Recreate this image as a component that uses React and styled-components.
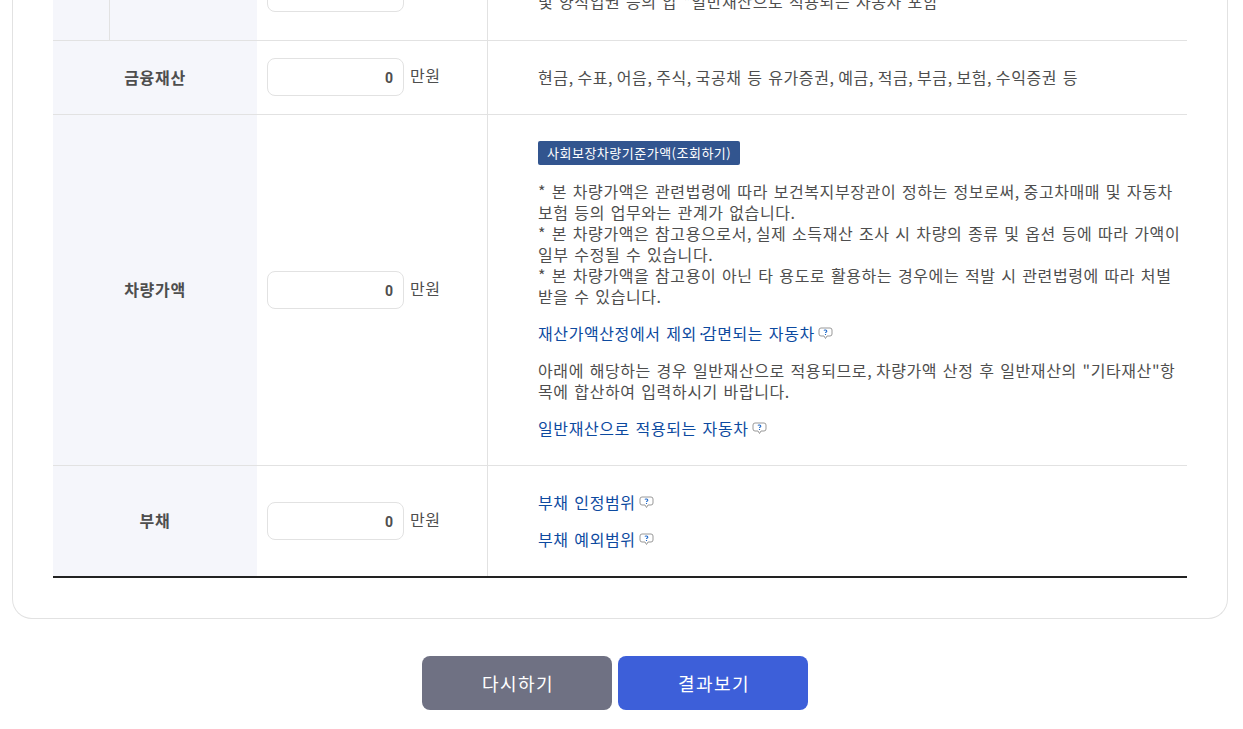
import React from "react";
import styled, { createGlobalStyle } from "styled-components";

const Global = createGlobalStyle`
  html, body { margin: 0; padding: 0; background: #fff; height: 100%; overflow: hidden; }
  body { font-family: "Noto Sans CJK KR", "Noto Sans", sans-serif; color: #4e4e4e; }
  * { box-sizing: border-box; }
`;
const Viewport = styled.div`height: 729px; overflow: hidden;`;
const Page = styled.div`padding: 0 15px 0 12px; margin-top: -40px;`;
const Card = styled.section`
  border: 1px solid #e2e2e2; border-top: 0; border-radius: 0 0 20px 20px;
  padding: 0 40px 40px; height: 659px;
`;
const Table = styled.div`border-bottom: 2px solid #222; width: 1134px;`;
const Row = styled.div`
  display: grid; grid-template-columns: 204px 230px 1fr;
  height: ${p => p.$h}px; border-bottom: ${p => p.$last ? "0" : "1px solid #e2e2e2"};
`;
const Label = styled.div`
  background: #f5f6fb; font-size: 16px; font-weight: 700; letter-spacing: 0.7px; color: #4e4e4e;
  display: flex; align-items: center; justify-content: center; padding-bottom: 2px;
`;
const SplitLabel = styled.div`background: #f5f6fb; display: grid; grid-template-columns: 56px 1fr;`;
const SplitCell = styled.div`
  font-size: 16px; font-weight: 700; letter-spacing: 0.7px; display: flex; align-items: center; justify-content: center;
  border-left: ${p => p.$line ? "1px solid #e2e2e2" : "0"}; padding-bottom: 18px;
`;
const InputCell = styled.div`
  display: flex; align-items: ${p => p.$top ? "flex-start" : "center"};
  padding: ${p => p.$top ? "14px" : "0"} 0 ${p => p.$nudge ? "1px" : "0"} 10px; gap: 6px;
`;
const Field = styled.div`
  width: 137px; height: 38px; border: 1px solid #e2e2e2; border-radius: 8px; background: #fff;
  font: 700 14px/38px Roboto, sans-serif; color: #4e4e4e; text-align: right; padding-right: 10px;
`;
const Unit = styled.span`font-size: 16px; letter-spacing: 0.6px; line-height: 21px; position: relative; top: -2px;`;
const Desc = styled.div`
  border-left: 1px solid #e2e2e2; padding: ${p => p.$pt}px 5px 0 50px; font-size: 16px; line-height: 21px;
  letter-spacing: 0.6px; word-spacing: 1.5px;
`;
const Para = styled.p`margin: 0 0 ${p => p.$mb ?? 16}px;`;
const Tight = styled.span`letter-spacing: ${p => p.$ls}px;`;
const Badge = styled.span`
  display: block; width: fit-content; height: 24px; padding: 0 9px; background: #32558f; color: #fff; border-radius: 2px;
  font-size: 13px; letter-spacing: 0.5px; line-height: 24px; margin-bottom: 16px;
`;
const HelpLink = styled.a`color: #0d4a9f; display: flex; align-items: center; gap: 3px; margin-bottom: 16px;`;
const Footer = styled.div`display: flex; justify-content: center; gap: 6px; margin-top: 37px; padding-right: 10px;`;
const Button = styled.button`
  width: 190px; height: 54px; border: 0; border-radius: 8px; color: #fff; font: 400 18px "Noto Sans CJK KR", sans-serif;
  letter-spacing: 1.5px; padding: 0 0 0 2px; background: ${p => p.$primary ? "#3d5fd9" : "#6f7183"};
`;

const Help = () => (
  <svg width="15" height="13" viewBox="0 0 15 13" fill="none">
    <path d="M3 1h9a2 2 0 0 1 2 2v4a2 2 0 0 1-2 2H9l-1.500 2.500L6 9H3a2 2 0 0 1-2-2V3a2 2 0 0 1 2-2z" fill="#fff" stroke="#999" />
    <path d="M6 3.500C6.300 2.700 8.800 2.700 8.800 4.200 8.800 5 7.500 5 7.500 6" stroke="#1f68c8" strokeWidth="1.100" fill="none" />
    <path d="M7.500 7v1" stroke="#1f68c8" strokeWidth="1.100" />
  </svg>
);
const Link = ({ children }) => <HelpLink>{children}<Help /></HelpLink>;
const C = () => <Tight $ls={-1.4}>,</Tight>;

export default function App() {
  return (
    <Viewport>
      <Global />
      <Page>
        <Card>
          <Table>
            <Row $h={81}>
              <SplitLabel>
                <SplitCell />
                <SplitCell $line>기타재산</SplitCell>
              </SplitLabel>
              <InputCell $top><Field>0</Field><Unit>만원</Unit></InputCell>
              <Desc $pt={31}>및 양식업권 등의 압 *일반재산으로 적용되는 자동차 포함</Desc>
            </Row>
            <Row $h={74}>
              <Label>금융재산</Label>
              <InputCell $nudge><Field>0</Field><Unit>만원</Unit></InputCell>
              <Desc $pt={26}>현금<C /> 수표<C /> 어음<C /> 주식<C /> 국공채 등 유가증권<C /> 예금<C /> 적금<C /> 부금<C /> 보험<C /> 수익증권 등</Desc>
            </Row>
            <Row $h={351}>
              <Label>차량가액</Label>
              <InputCell><Field>0</Field><Unit>만원</Unit></InputCell>
              <Desc $pt={26}>
                <Badge>사회보장차량기준가액(조회하기)</Badge>
                <Para>
                  * 본 차량가액은 관련법령에 따라 보건복지부장관이 정하는 정보로써<C /> 중고차매매 및 자동차 보험 등의 업무와는 관계가 없습니다.<br />
                  * 본 차량가액은 참고용으로서<C /> 실제 소득재산 조사 시 차량의 종류 및 옵션 등에 따라 가액이 일부 수정될 수 있습니다.<br />
                  * 본 차량가액을 참고용이 아닌 타 용도로 활용하는 경우에는 적발 시 관련법령에 따라 처벌 받을 수 있습니다.
                </Para>
                <Link><span>재산가액산정에서 제외<Tight $ls={-4}>·</Tight>감면되는 자동차</span></Link>
                <Para>아래에 해당하는 경우 일반재산으로 적용되므로<C /> 차량가액 산정 후 일반재산의 "기타재산"항목에 합산하여 입력하시기 바랍니다.</Para>
                <Link>일반재산으로 적용되는 자동차</Link>
              </Desc>
            </Row>
            <Row $h={110} $last>
              <Label>부채</Label>
              <InputCell><Field>0</Field><Unit>만원</Unit></InputCell>
              <Desc $pt={26}>
                <Link>부채 인정범위</Link>
                <Link>부채 예외범위</Link>
              </Desc>
            </Row>
          </Table>
        </Card>
        <Footer>
          <Button>다시하기</Button>
          <Button $primary>결과보기</Button>
        </Footer>
      </Page>
    </Viewport>
  );
}
